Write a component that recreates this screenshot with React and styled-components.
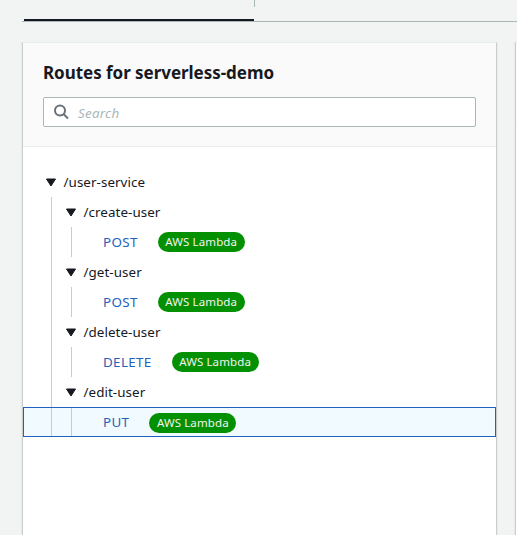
import React from 'react';
import styled, { createGlobalStyle } from 'styled-components';

const GlobalStyle = createGlobalStyle`
  * { box-sizing: border-box; }
  body {
    margin: 0;
    background: #f2f4f4;
    color: #16191f;
    font: 13.4px/20px "Noto Sans", sans-serif;
    overflow: hidden;
  }
`;

const Page = styled.main`
  width: 517px;
  height: 535px;
  overflow: hidden;
  display: flex;
  flex-direction: column;
  background: #f2f4f4;
`;

const TabBar = styled.div`
  display: flex;
  flex: none;
  height: 22px;
  margin-left: 22px;
  padding-left: 2px;
  border-bottom: 1px solid #aab7b8;
`;

const ActiveTab = styled.div`
  width: 230px;
  height: 21px;
  border-bottom: 2px solid #16191f;
`;

const TabDivider = styled.div`
  width: 1px;
  height: 7px;
  background: #aab7b8;
`;

const Columns = styled.div`
  display: flex;
  flex: 1;
  gap: 18px;
  padding: 20px 0 0 22px;
`;

const Panel = styled.section`
  flex: none;
  width: 475px;
  background: #fff;
  border: 1px solid #c8cecd;
  border-top-color: #eaeded;
  border-bottom: 0;
  box-shadow: 0 0 1px 1px #e9ecec;
  clip-path: inset(0 -2px 0 -2px);
`;

const PanelHeader = styled.header`
  height: ${(p) => p.$height}px;
  padding: 17px 20px 0;
  background: #fafafa;
  border-bottom: 1px solid #eaeded;
`;

const Title = styled.h2`
  margin: 0 0 12px;
  font-size: 17px;
  line-height: 25px;
  font-weight: 700;
  letter-spacing: -0.04px;
  white-space: nowrap;
`;

const SearchBox = styled.label`
  display: flex;
  align-items: center;
  gap: 8px;
  height: 30px;
  padding: 0 10px 0 9px;
  border: 1px solid #aab7b8;
  border-radius: 2px;
  background: #fff;
`;

const SearchIcon = styled.svg`
  flex: none;
  width: 17px;
  height: 16px;
  fill: none;
  stroke: #687078;
  stroke-width: 2;
`;

const SearchInput = styled.input`
  flex: 1;
  min-width: 0;
  height: 22px;
  padding: 2px 0 0;
  border: 0;
  outline: 0;
  background: transparent;
  font: italic 13.4px "Noto Sans", sans-serif;
  letter-spacing: 0.25px;
  &::placeholder { color: #aab7b8; opacity: 1; }
`;

const Tree = styled.div`
  padding-top: 20px;
`;

const Row = styled.div`
  display: flex;
  align-items: center;
  height: 30px;
  padding-left: ${(p) => (p.$depth === 0 ? 23 : 28)}px;
  background: ${(p) => (p.$selected ? '#f1faff' : 'transparent')};
  box-shadow: ${(p) => (p.$selected ? 'inset 0 0 0 1px #1d62bd' : 'none')};
`;

const Guide = styled.span`
  align-self: stretch;
  flex: none;
  width: 1px;
  margin: ${(p) => (p.$selected ? '1px' : '0')} ${(p) => p.$gap}px ${(p) => (p.$selected ? '1px' : '0')} 0;
  background: #c9cccd;
`;

const Caret = styled.svg`
  flex: none;
  width: 10px;
  height: 9px;
  margin-right: 7.5px;
  fill: #16191f;
  stroke: #16191f;
  stroke-linejoin: round;
`;

const Path = styled.span`
  white-space: nowrap;
  letter-spacing: 0.06px;
`;

const Method = styled.span`
  color: #1d62bd;
  margin-right: 20px;
  letter-spacing: 0.33px;
`;

const Badge = styled.span`
  height: 20px;
  width: 87px;
  text-align: center;
  border-radius: 10px;
  background: #039103;
  color: #f2f3f3;
  font-size: 11.49px;
  line-height: 20px;
  letter-spacing: 0.12px;
  white-space: nowrap;
  margin-top: ${(p) => (p.$selected ? '2px' : '0')};
`;

const routes = [
  { path: '/create-user', method: 'POST' },
  { path: '/get-user', method: 'POST' },
  { path: '/delete-user', method: 'DELETE' },
  { path: '/edit-user', method: 'PUT', selected: true },
];

function CaretDown() {
  return (
    <Caret viewBox="0 0 10 9">
      <path d="M.5 1h9L5 8z" />
    </Caret>
  );
}

function Route({ path, method, selected }) {
  return (
    <>
      <Row $depth={1}>
        <Guide $gap={14} />
        <CaretDown />
        <Path>{path}</Path>
      </Row>
      <Row $depth={2} $selected={selected}>
        <Guide $gap={19} $selected={selected} />
        <Guide $gap={31} $selected={selected} />
        <Method>{method}</Method>
        <Badge $selected={selected}>AWS Lambda</Badge>
      </Row>
    </>
  );
}

export default function App() {
  return (
    <Page>
      <GlobalStyle />
      <TabBar>
        <ActiveTab />
        <TabDivider />
      </TabBar>
      <Columns>
        <Panel>
          <PanelHeader $height={104}>
            <Title>Routes for serverless-demo</Title>
            <SearchBox>
              <SearchIcon viewBox="0 0 17 16">
                <circle cx="7" cy="6.5" r="5" />
                <path d="M10.5 10l4.5 4.5" />
              </SearchIcon>
              <SearchInput placeholder="Search" />
            </SearchBox>
          </PanelHeader>
          <Tree>
            <Row $depth={0}>
              <CaretDown />
              <Path>/user-service</Path>
            </Row>
            {routes.map((r) => (
              <Route key={r.path} {...r} />
            ))}
          </Tree>
        </Panel>
        <Panel>
          <PanelHeader $height={84} />
        </Panel>
      </Columns>
    </Page>
  );
}
